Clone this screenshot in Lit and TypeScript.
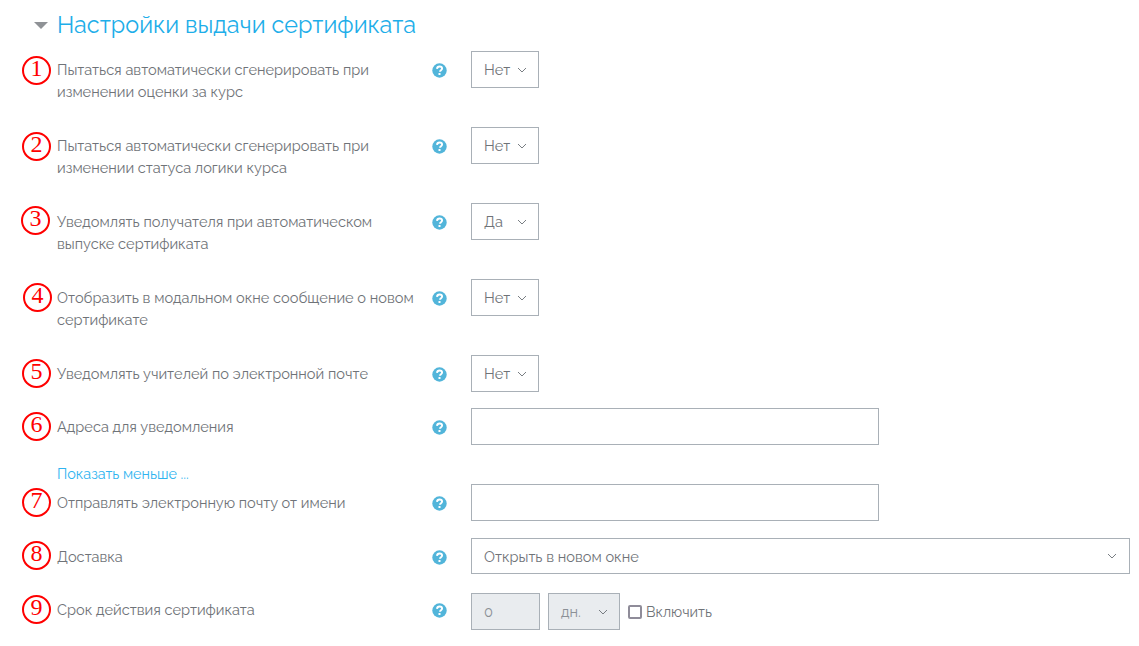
import { LitElement, html, css, svg } from "lit";
import { customElement } from "lit/decorators.js";

type Row = {
  n: number; left: number; top: number; label: string[]; kind: string; value?: string; h: number; gap: number;
};

const rows: Row[] = [
  { n: 1, left: -12, top: 5, label: ["Пытаться автоматически сгенерировать при", "изменении оценки за курс"], kind: "sel", value: "Нет", h: 37, gap: 24 },
  { n: 2, left: -12, top: 5, label: ["Пытаться автоматически сгенерировать при", "изменении статуса логики курса"], kind: "sel", value: "Нет", h: 37, gap: 24 },
  { n: 3, left: -13, top: 3, label: ["Уведомлять получателя при автоматическом", "выпуске сертификата"], kind: "sel", value: "Да", h: 37, gap: 24 },
  { n: 4, left: -11, top: 4, label: ["Отобразить в модальном окне сообщение о новом", "сертификате"], kind: "sel", value: "Нет", h: 37, gap: 24 },
  { n: 5, left: -12, top: 4, label: ["Уведомлять учителей по электронной почте"], kind: "sel", value: "Нет", h: 37, gap: 16 },
  { n: 6, left: -12, top: 4, label: ["Адреса для уведомления"], kind: "input", h: 37, gap: 0 },
];
const rows2: Row[] = [
  { n: 7, left: -12, top: 4, label: ["Отправлять электронную почту от имени"], kind: "input", h: 37, gap: 17 },
  { n: 8, left: -12, top: 3, label: ["Доставка"], kind: "wide", value: "Открыть в новом окне", h: 36, gap: 19 },
  { n: 9, left: -12, top: 2, label: ["Срок действия сертификата"], kind: "dur", h: 37, gap: 0 },
];

const chevron = svg`<svg class="chev" width="10" height="6" viewBox="0 0 10 6"><path d="M1 1l4 4 4-4" fill="none" stroke="#6a6f75" stroke-width="0.9"/></svg>`;
const help = html`<svg class="help" width="15" height="15" viewBox="0 0 15 15"><circle cx="7.5" cy="7.5" r="7.2" fill="#52b5da"/><path d="M5 5.9c.1-1.6 1.2-2.4 2.6-2.4s2.5.8 2.5 2.1c0 1.7-2.1 1.7-2.1 3.2" fill="none" stroke="#fff" stroke-width="1.9"/><rect x="6.5" y="10" width="2" height="2" fill="#fff"/></svg>`;

@customElement("app-root")
export class AppRoot extends LitElement {
  static styles = css`
    :host { display: block; width: 1139px; height: 646px; background: #fff; overflow: hidden; font-family: "Raleway", "Lato", "Open Sans", sans-serif; color: #6f7378; font-size: 14.6px; }
    .wrap { padding: 9px 9px 0 34px; }
    .legend { display: flex; align-items: center; gap: 9px; height: 32px; margin-bottom: 10px; }
    .tri { width: 0; height: 0; border-left: 7px solid transparent; border-right: 7px solid transparent; border-top: 7px solid #8f9296; }
    h2 { margin: 0; font-weight: 400; font-size: 23.36px; color: #1eaee9; line-height: 32px; }
    .row { position: relative; display: grid; grid-template-columns: 375px 39px 1fr; padding-left: 23px; }
    .label { line-height: 22px; padding-top: 8px; white-space: nowrap; }
    .hcell { padding-top: 12px; line-height: 0; }
    .row.dur .label { padding-top: 6px; }
    .row.dur .hcell { padding-top: 10px; }
    .help { display: block; }
    .ctl { display: flex; gap: 8px; align-items: flex-start; }
    .box { box-sizing: border-box; border: 1px solid #a9b0b7; background: #fff; display: flex; align-items: center; height: 100%; padding: 0 12px; }
    .sel { width: 68px; justify-content: space-between; padding-right: 11px; }
    .input { width: 408px; }
    .wide { width: 659px; justify-content: space-between; padding-right: 12px; }
    .dis { background: #e9ecef; color: #8b9096; }
    .num { width: 69px; }
    .unit { width: 72px; justify-content: space-between; padding-right: 11px; }
    .check { display: flex; align-items: center; gap: 4px; height: 100%; font-size: 14.3px; }
    .cb { box-sizing: border-box; width: 14px; height: 14px; border: 2px solid #8f8c99; border-radius: 2px; background: #fff; }
    .more { padding-left: 23px; height: 39px; display: flex; align-items: flex-end; line-height: 21px; color: #2fb4f0; font-size: 14.4px; }
    .badge { position: absolute; box-sizing: border-box; width: 29px; height: 29px; border: 2px solid #f00; border-radius: 50%; color: #f00; background: #fff; font-family: "Liberation Serif", serif; font-size: 24px; line-height: 20px; text-align: center; }
  `;

  private control(r: Row) {
    const s = `height:${r.h}px`;
    if (r.kind === "sel") return html`<div class="ctl" style=${s}><div class="box sel"><span>${r.value}</span>${chevron}</div></div>`;
    if (r.kind === "input") return html`<div class="ctl" style=${s}><div class="box input"></div></div>`;
    if (r.kind === "wide") return html`<div class="ctl" style=${s}><div class="box wide"><span>${r.value}</span>${chevron}</div></div>`;
    return html`<div class="ctl" style=${s}>
      <div class="box dis num">0</div>
      <div class="box dis unit"><span>дн.</span>${chevron}</div>
      <div class="check"><span class="cb"></span><span>Включить</span></div>
    </div>`;
  }

  private row(r: Row) {
    return html`<div class="row ${r.kind}" style="margin-bottom:${r.gap}px">
      <div class="badge" style="left:${r.left}px;top:${r.top}px">${r.n}</div>
      <div class="label">${r.label.map((l) => html`<div>${l}</div>`)}</div>
      <div class="hcell">${help}</div>
      ${this.control(r)}
    </div>`;
  }

  render() {
    return html`<div class="wrap">
      <div class="legend"><span class="tri"></span><h2>Настройки выдачи сертификата</h2></div>
      ${rows.map((r) => this.row(r))}
      <div class="more"><a>Показать меньше ...</a></div>
      ${rows2.map((r) => this.row(r))}
    </div>`;
  }
}
